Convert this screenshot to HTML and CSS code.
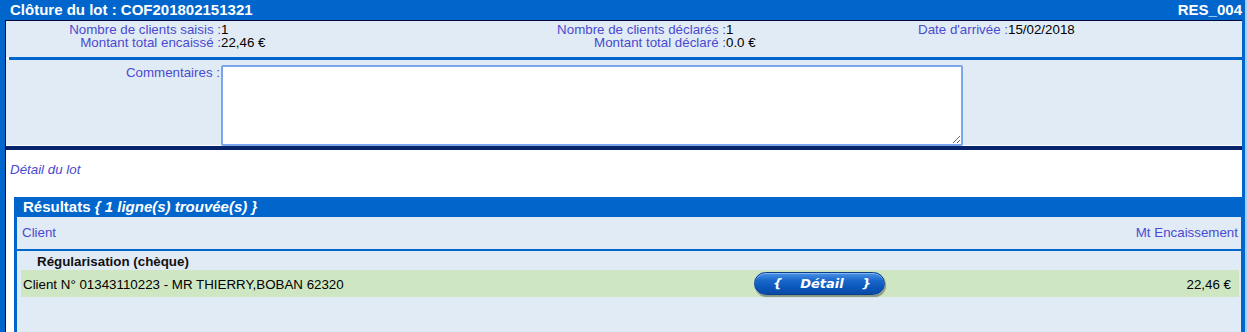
FILE: index.html
```html
<!DOCTYPE html>
<html lang="fr">
<head>
<meta charset="utf-8">
<title>Clôture du lot</title>
<link rel="stylesheet" href="styles.css">
</head>
<body>
<div class="outer">
  <div class="titlebar">
    <span>Clôture du lot : COF201802151321</span>
    <span>RES_004</span>
  </div>
  <div class="frame">
    <div class="info">
      <span class="lbl">Nombre de clients saisis :</span><span class="val">1</span>
      <span class="lbl">Nombre de clients déclarés :</span><span class="val">1</span>
      <span class="lbl">Date d'arrivée :</span><span class="val">15/02/2018</span>
      <span class="lbl">Montant total encaissé :</span><span class="val">22,46 €</span>
      <span class="lbl">Montant total déclaré :</span><span class="val">0.0 €</span>
      <span class="lbl"></span><span class="val"></span>
    </div>
    <div class="sep"></div>
    <div class="comments">
      <label class="lbl clabel" for="comm">Commentaires :</label>
      <textarea id="comm" class="comm" autofocus></textarea>
    </div>
    <div class="detail-zone">
      <div class="detail-title">Détail du lot</div>
      <div class="results">
        <div class="res-head">Résultats <em>{ 1 ligne(s) trouvée(s) }</em></div>
        <div class="col-head">
          <span>Client</span>
          <span>Mt Encaissement</span>
        </div>
        <div class="res-body">
          <div class="group">Régularisation (chèque)</div>
          <div class="row">
            <span class="client">Client N° 01343110223 - MR THIERRY,BOBAN 62320</span>
            <button class="btn-detail" type="button"><span>{</span><span>Détail</span><span>}</span></button>
            <span class="amount">22,46 €</span>
          </div>
        </div>
      </div>
    </div>
  </div>
</div>
</body>
</html>
```
FILE: styles.css
```css
html, body {
  margin: 0;
  padding: 0;
  background: #ffffff;
}
body {
  font-family: "Liberation Sans", Arial, sans-serif;
  font-size: 13.33px;
}
.outer {
  width: 1245px;
  height: 332px;
  border-right: 2px solid #a9cdf3;
  background: #0066cc;
  display: flex;
  flex-direction: column;
  overflow: hidden;
}
.titlebar {
  height: 20px;
  flex: none;
  display: flex;
  justify-content: space-between;
  align-items: center;
  padding: 0 3px 0 10px;
  color: #ffffff;
  font-weight: bold;
  font-size: 15px;
  line-height: 20px;
}
.frame {
  flex: 1;
  margin: 0 3px 0 5px;
  border-top: 1px solid #000a3c;
  border-left: 1px solid #000a3c;
  background: #ffffff;
  display: flex;
  flex-direction: column;
}
.lbl {
  color: #4a4ad0;
  text-align: right;
}
.val {
  color: #000000;
}
.info {
  background: #e1ebf5;
  height: 36px;
  box-sizing: border-box;
  padding-top: 2px;
  display: grid;
  grid-template-columns: 215px 100px 405px 100px 182px 1fr;
  grid-auto-rows: 13px;
  line-height: 13px;
  white-space: nowrap;
}
.sep {
  height: 3px;
  margin-left: 3px;
  background: #0066cc;
}
.comments {
  background: #e1ebf5;
  height: 86px;
  box-sizing: border-box;
  padding-top: 5px;
  display: grid;
  grid-template-columns: 215px 742px 1fr;
  align-items: start;
  border-bottom: 1px solid #ffffff;
}
.clabel {
  line-height: 13px;
  padding-top: 1px;
  padding-right: 1px;
}
.comm {
  box-sizing: border-box;
  width: 742px;
  height: 81px;
  margin: 0;
  border: 2px solid #7aa6ee;
  border-radius: 2px;
  outline: none;
  background: #ffffff;
  font-family: "Liberation Mono", monospace;
  font-size: 13px;
  padding: 2px 3px;
  display: block;
  caret-color: #000000;
}
.detail-zone {
  flex: 1;
  border-top: 4px solid #07236a;
  display: flex;
  flex-direction: column;
}
.detail-title {
  color: #4a4ad0;
  font-style: italic;
  line-height: 13px;
  padding: 13px 0 0 4px;
  height: 13px;
}
.results {
  flex: 1;
  margin: 21px 0 0 8px;
  border-left: 3px solid #0066cc;
  border-right: 1px solid #0066cc;
  background: #e1ebf5;
  display: flex;
  flex-direction: column;
}
.res-head {
  height: 20px;
  line-height: 20px;
  margin-left: -3px;
  padding-left: 9px;
  background: #0066cc;
  color: #ffffff;
  font-weight: bold;
  font-size: 15px;
}
.res-head em {
  font-style: italic;
}
.col-head {
  height: 32px;
  line-height: 32px;
  display: flex;
  justify-content: space-between;
  padding: 0 3px 0 5px;
  color: #4a4ad0;
  border-bottom: 2px solid #0066cc;
}
.res-body {
  flex: 1;
}
.group {
  height: 19px;
  box-sizing: border-box;
  padding: 3px 0 0 20px;
  line-height: 16px;
  font-weight: bold;
  color: #111111;
}
.row {
  height: 27px;
  margin: 0 2px 0 4px;
  background: #cfe6c3;
  display: grid;
  grid-template-columns: 733px 131px 1fr;
  align-items: center;
  color: #000000;
}
.client {
  padding-left: 2px;
  padding-top: 1px;
  white-space: nowrap;
}
.amount {
  text-align: right;
  padding-right: 8px;
  padding-top: 1px;
}
.btn-detail {
  width: 131px;
  height: 23px;
  margin: 0;
  padding: 0 13px 0 18px;
  border: 1px solid #0a3f8f;
  border-radius: 12px;
  background: linear-gradient(#4a93e6 0%, #1a68cc 35%, #0a56bb 70%, #0a4aa6 100%);
  box-shadow: 1px 2px 1px rgba(0, 0, 0, 0.35), inset 0 1px 0 rgba(255, 255, 255, 0.35);
  color: #ffffff;
  font-family: "DejaVu Sans", Verdana, sans-serif;
  font-weight: bold;
  font-style: italic;
  font-size: 13px;
  display: flex;
  justify-content: space-between;
  align-items: center;
  line-height: 1;
}
```
